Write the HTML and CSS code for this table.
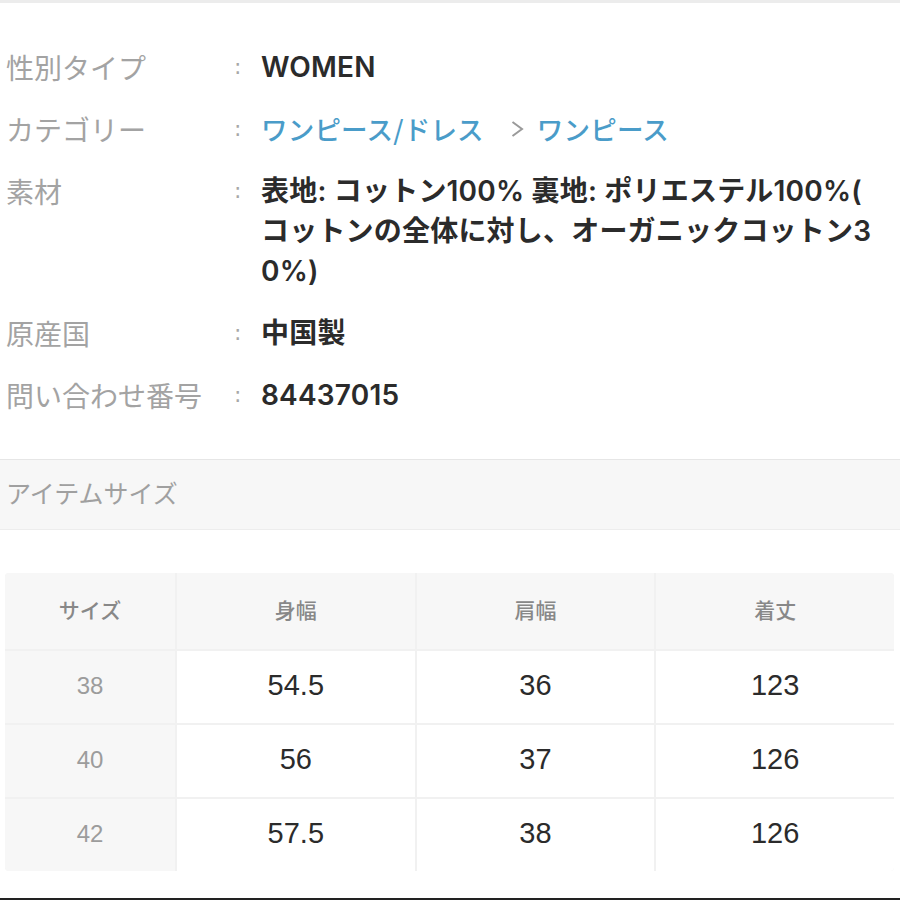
FILE: index.html
```html
<!DOCTYPE html>
<html lang="ja">
<head>
<meta charset="utf-8">
<link rel="stylesheet" href="styles.css">
</head>
<body>
<div class="page">
  <div class="info">
    <div class="row">
      <div class="label">性別タイプ</div>
      <div class="colon">:</div>
      <div class="value">WOMEN</div>
    </div>
    <div class="row">
      <div class="label">カテゴリー</div>
      <div class="colon">:</div>
      <div class="value crumbs">
        <span class="link">ワンピース/ドレス</span>
        <svg class="chev" width="14" height="16" viewBox="0 0 14 16"><path d="M2.5 1 L12 8 L2.5 15" fill="none" stroke="#9a9a9a" stroke-width="2"/></svg>
        <span class="link">ワンピース</span>
      </div>
    </div>
    <div class="row">
      <div class="label">素材</div>
      <div class="colon">:</div>
      <div class="value">表地: コットン100% 裏地: ポリエステル100%(<br>コットンの全体に対し、オーガニックコットン3<br>0%)</div>
    </div>
    <div class="row">
      <div class="label">原産国</div>
      <div class="colon">:</div>
      <div class="value">中国製</div>
    </div>
    <div class="row">
      <div class="label">問い合わせ番号</div>
      <div class="colon">:</div>
      <div class="value">84437015</div>
    </div>
  </div>

  <div class="section-head">アイテムサイズ</div>

  <div class="size-table">
    <div class="th">サイズ</div>
    <div class="th">身幅</div>
    <div class="th">肩幅</div>
    <div class="th">着丈</div>

    <div class="sz">38</div>
    <div class="td">54.5</div>
    <div class="td">36</div>
    <div class="td">123</div>

    <div class="sz">40</div>
    <div class="td">56</div>
    <div class="td">37</div>
    <div class="td">126</div>

    <div class="sz">42</div>
    <div class="td">57.5</div>
    <div class="td">38</div>
    <div class="td">126</div>
  </div>

  <div class="bottom-bar"></div>
</div>
</body>
</html>
```

FILE: styles.css
```css
* { box-sizing: border-box; }

html, body {
  margin: 0;
  padding: 0;
  background: #fff;
}

body {
  font-family: "Noto Sans CJK JP", "Noto Sans", sans-serif;
  color: #333;
}

.page {
  width: 900px;
  border-top: 3px solid #ececec;
}

.info {
  display: flex;
  flex-direction: column;
  gap: 22px;
  padding: 44px 0 44px 6px;
}

.row {
  display: grid;
  grid-template-columns: 220px 35px 1fr;
  align-items: start;
  line-height: 40px;
}

.label {
  font-size: 28px;
  color: #a3a3a3;
  white-space: nowrap;
}

.colon {
  font-family: "DejaVu Sans", sans-serif;
  font-size: 22px;
  color: #a8a8a8;
  padding-left: 8px;
}

.value {
  font-family: "Inter", "Noto Sans CJK JP", sans-serif;
  font-weight: 600;
  font-size: 28px;
  letter-spacing: 0.2px;
  color: #2b2b2b;
  white-space: nowrap;
}

.crumbs {
  display: flex;
  align-items: center;
}

.link {
  font-family: "Noto Sans CJK JP", sans-serif;
  font-weight: 500;
  font-size: 26.5px;
  color: #4a9cc9;
}

.chev {
  margin: 0 13px 0 26px;
}

.section-head {
  height: 71px;
  border-top: 1px solid #e6e6e6;
  border-bottom: 1px solid #ededed;
  background: #f7f7f7;
  font-size: 25px;
  color: #a0a0a0;
  display: flex;
  align-items: center;
  padding: 0 0 6px 6px;
  margin-bottom: 43px;
}

.size-table {
  margin: 0 6px 0 5px;
  display: grid;
  grid-template-columns: 170px 1fr 1fr 1fr;
  grid-template-rows: 76px 72px 72px 72px;
  gap: 2px;
  background: #f1f1f1;
  border-radius: 4px;
  overflow: hidden;
}

.th, .sz, .td {
  display: flex;
  align-items: center;
  justify-content: center;
}

.th {
  background: #f7f7f7;
  font-size: 21px;
  font-weight: 500;
  color: #888;
  padding-bottom: 4px;
}

.sz {
  background: #f7f7f7;
  font-family: "Liberation Sans", sans-serif;
  font-size: 24px;
  color: #9c9c9c;
  padding-bottom: 3px;
}

.td {
  background: #fff;
  font-family: "Liberation Sans", sans-serif;
  font-size: 29px;
  color: #2b2b2b;
  padding-bottom: 3px;
}

.bottom-bar {
  margin-top: 27px;
  border-top: 2px solid #222;
}
```
